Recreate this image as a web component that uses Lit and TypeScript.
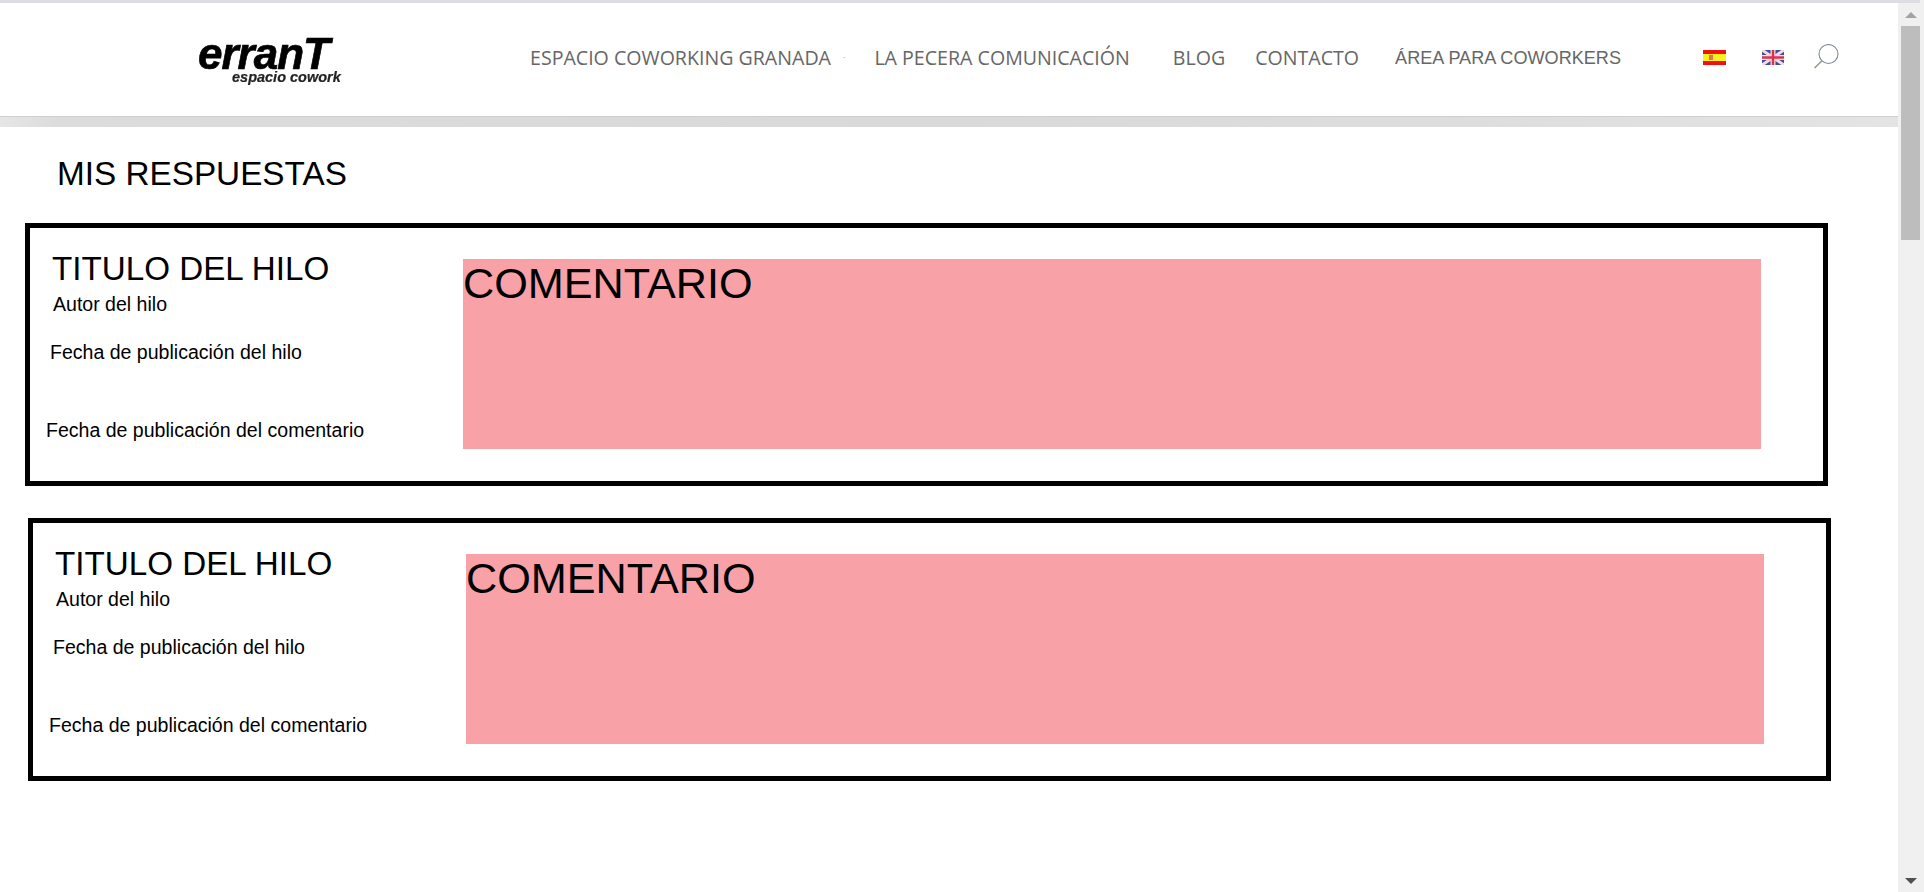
import { LitElement, css, html } from 'lit';
import { customElement } from 'lit/decorators.js';

@customElement('app-root')
export class AppRoot extends LitElement {
  static styles = css`
    :host {
      display: flex;
      height: 892px;
      overflow: hidden;
      background: #fff;
      font-family: 'Liberation Sans', Arial, sans-serif;
      color: #000;
    }

    .page {
      width: 1898px;
      flex: none;
    }

    .topline {
      height: 3px;
      width: 1920px;
      background: #dedde3;
      position: relative;
    }

    header {
      height: 113px;
      display: flex;
      align-items: center;
      border-bottom: 1px solid #cfcfcf;
    }

    .logo {
      margin: 1px 0 0 198px;
      width: 150px;
      flex: none;
      font-style: italic;
      font-weight: 700;
      filter: blur(0.5px);
    }

    .logo .name {
      display: block;
      font-size: 44px;
      line-height: 35px;
      letter-spacing: -1px;
      -webkit-text-stroke: 0.7px #000;
    }

    .logo .sub {
      display: block;
      font-size: 14.5px;
      line-height: 16px;
      margin: -2px 0 0 34px;
      color: #222;
      -webkit-text-stroke: 0.2px #222;
    }

    nav {
      display: flex;
      align-items: center;
      margin: -4px 0 0 182px;
      font-family: 'Open Sans', sans-serif;
      font-size: 19.6px;
      color: #666;
      white-space: nowrap;
    }

    .dot {
      font-size: 9px;
      margin: 0 29px 0 12px;
      color: #999;
    }

    .m-blog { margin-left: 43px; }
    .m-contacto { margin-left: 30px; }

    .area {
      margin: 1px 0 0 36px;
      font-family: 'Liberation Sans', Arial, sans-serif;
      font-size: 18.1px;
    }

    .flag {
      display: block;
      flex: none;
      margin-top: -4px;
      filter: blur(0.4px);
    }

    .es { margin-left: 82px; }
    .uk { margin-left: 36px; }

    .search {
      flex: none;
      margin: -5px 0 0 29px;
      display: block;
    }

    .band {
      height: 10px;
      background: linear-gradient(90deg, #e6e6e6 0, #dcdcdc 3%, #d9d9d9 50%, #dedede 80%, #e4e4e4 100%);
    }

    h1 {
      margin: 28px 0 0 57px;
      font-size: 33.3px;
      font-weight: 400;
      line-height: 38px;
    }

    .card {
      box-sizing: border-box;
      width: 1803px;
      height: 263px;
      border: 5px solid #000;
      display: flex;
      padding: 31px 0 0 0;
    }

    .first { margin: 30px 0 0 25px; }
    .second { margin: 32px 0 0 28px; }

    .info {
      width: 433px;
      flex: none;
      font-size: 19.55px;
      line-height: 22px;
    }

    .info h2 {
      margin: -9px 0 0 22px;
      font-size: 33.2px;
      font-weight: 400;
      line-height: 38px;
    }

    .info p { margin: 0; }
    .author { padding: 5px 0 0 23px; }
    .posted { padding: 26px 0 0 20px; }
    .commented { padding: 56px 0 0 16px; }

    .comment {
      width: 1298px;
      height: 190px;
      background: #f8a2a8;
      font-size: 43.2px;
      line-height: 48px;
      flex: none;
    }

    .scrollbar {
      width: 26px;
      flex: none;
      background: #f0f0f0;
      display: flex;
      flex-direction: column;
      align-items: center;
      justify-content: space-between;
      padding-bottom: 8px;
      box-sizing: border-box;
    }

    .scrollbar .thumb-wrap {
      display: flex;
      flex-direction: column;
      align-items: center;
    }

    .up {
      width: 0;
      height: 0;
      margin-top: 12px;
      border-left: 6px solid transparent;
      border-right: 6px solid transparent;
      border-bottom: 6px solid #a3a3a3;
    }

    .thumb {
      width: 19px;
      height: 214px;
      margin: 8px 0 0 -2px;
      background: #bdbdbd;
    }

    .down {
      width: 0;
      height: 0;
      border-left: 6px solid transparent;
      border-right: 6px solid transparent;
      border-top: 6px solid #505050;
    }
  `;

  renderCard(cls: string) {
    return html`
      <section class="card ${cls}">
        <div class="info">
          <h2>TITULO DEL HILO</h2>
          <p class="author">Autor del hilo</p>
          <p class="posted">Fecha de publicación del hilo</p>
          <p class="commented">Fecha de publicación del comentario</p>
        </div>
        <div class="comment">COMENTARIO</div>
      </section>
    `;
  }

  render() {
    return html`
      <div class="page">
        <div class="topline"></div>
        <header>
          <div class="logo">
            <span class="name">erranT</span>
            <span class="sub">espacio cowork</span>
          </div>
          <nav>
            <span>ESPACIO COWORKING GRANADA</span>
            <span class="dot">·</span>
            <span>LA PECERA COMUNICACIÓN</span>
            <span class="m-blog">BLOG</span>
            <span class="m-contacto">CONTACTO</span>
            <span class="area">ÁREA PARA COWORKERS</span>
          </nav>
          <svg class="flag es" width="23" height="15" viewBox="0 0 23 15">
            <rect width="23" height="15" fill="#f01010" />
            <rect y="4" width="23" height="7" fill="#f8f020" />
            <rect x="6" y="5" width="4" height="5" fill="#e87050" />
          </svg>
          <svg class="flag uk" width="22" height="15" viewBox="0 0 22 15">
            <rect width="22" height="15" fill="#3a4f9c" />
            <path d="M0 0L22 15M22 0L0 15" stroke="#f4dce0" stroke-width="3" />
            <path d="M11 0V15M0 7.5H22" stroke="#f4dce0" stroke-width="5" />
            <path d="M11 0V15M0 7.5H22" stroke="#e0304a" stroke-width="2.4" />
          </svg>
          <svg class="search" width="26" height="26" viewBox="0 0 26 26" fill="none">
            <circle cx="15.5" cy="10" r="9.5" stroke="#7d8c99" stroke-width="1.1" />
            <path d="M8.8 17L1.5 24" stroke="#9a8f80" stroke-width="1.4" />
          </svg>
        </header>
        <div class="band"></div>
        <h1>MIS RESPUESTAS</h1>
        ${this.renderCard('first')} ${this.renderCard('second')}
      </div>
      <div class="scrollbar">
        <div class="thumb-wrap">
          <div class="up"></div>
          <div class="thumb"></div>
        </div>
        <div class="down"></div>
      </div>
    `;
  }
}
